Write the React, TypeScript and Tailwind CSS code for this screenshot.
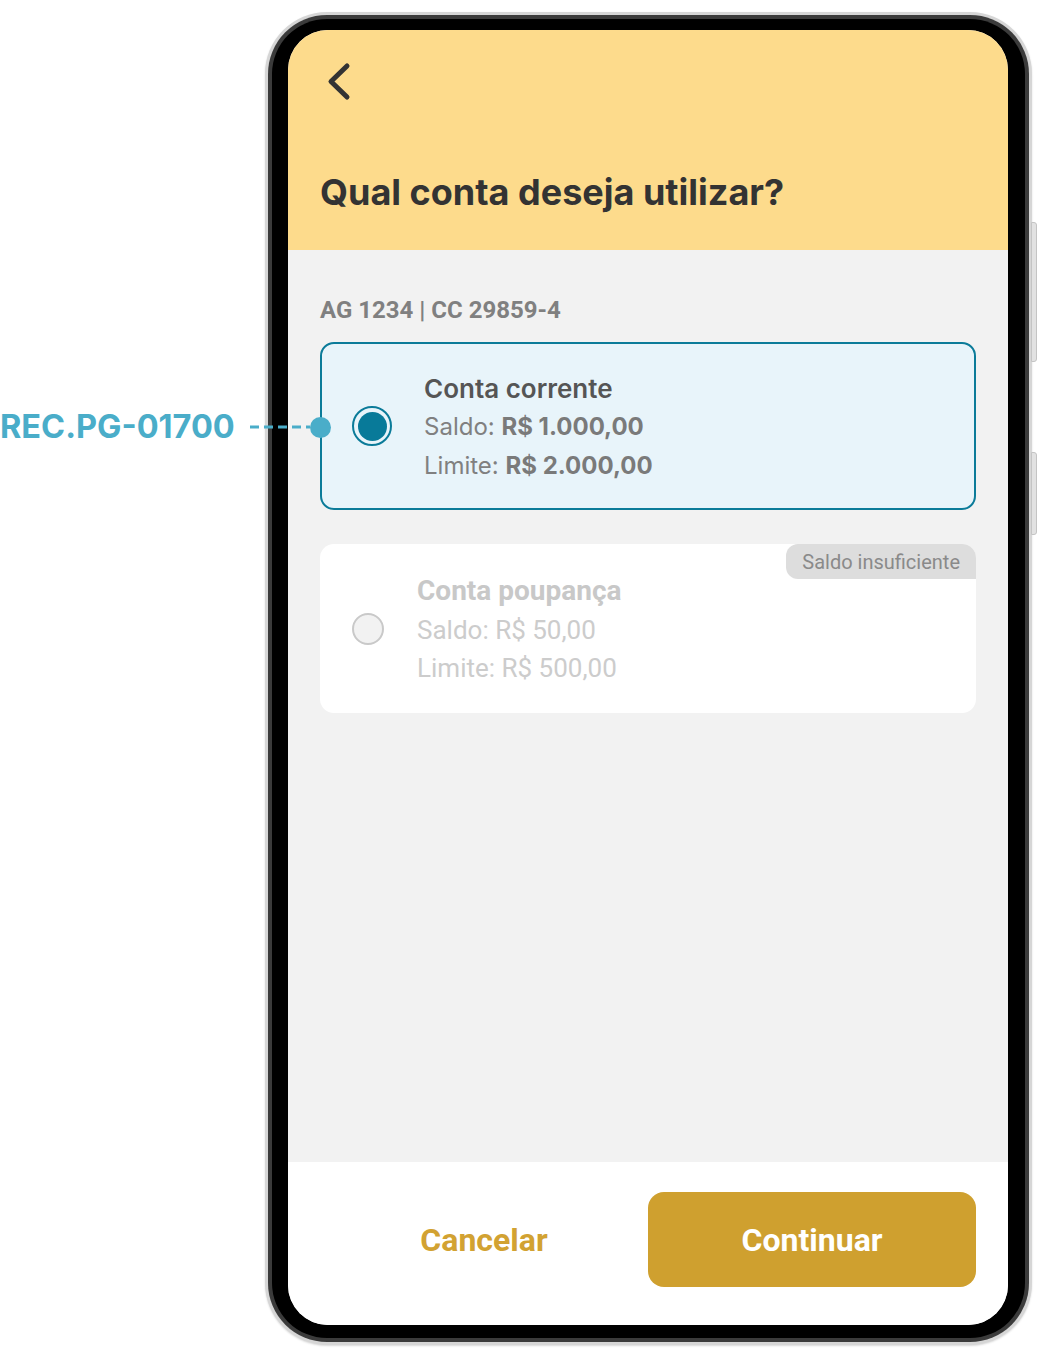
import { useState } from "react";

interface Account {
  id: string;
  name: string;
  saldo: string;
  limite: string;
  disabled?: boolean;
}

const accounts: Account[] = [
  { id: "cc", name: "Conta corrente", saldo: "R$ 1.000,00", limite: "R$ 2.000,00" },
  { id: "cp", name: "Conta poupança", saldo: "R$ 50,00", limite: "R$ 500,00", disabled: true },
];

function BackChevron() {
  return (
    <svg width="32" height="40" viewBox="0 0 32 40" fill="none">
      <path d="M27 4 L11 19.5 L27 35" stroke="#333333" strokeWidth="5" strokeLinecap="round" strokeLinejoin="round" />
    </svg>
  );
}

function ActiveCard({ acc }: { acc: Account }) {
  return (
    <div className="h-[168px] rounded-[14px] border-2 border-[#0b7b99] bg-[#e8f4fa] flex items-center pl-[30px]">
      <div className="w-[40px] h-[40px] rounded-full border-2 border-[#0b7b99] flex items-center justify-center shrink-0">
        <div className="w-[29px] h-[29px] rounded-full bg-[#087a99]" />
      </div>
      <div className="ml-[32px] mt-[3px] font-['Inter',sans-serif] text-[24px] leading-[38.5px] text-[#808080]">
        <div className="font-semibold text-[26px] text-[#555555]">{acc.name}</div>
        <div>
          Saldo: <span className="font-bold text-[#7a7a7a]">{acc.saldo}</span>
        </div>
        <div>
          Limite: <span className="font-bold text-[#7a7a7a]">{acc.limite}</span>
        </div>
      </div>
    </div>
  );
}

function DisabledCard({ acc }: { acc: Account }) {
  return (
    <div className="relative h-[169px] rounded-[14px] bg-white flex items-center pl-[32px]">
      <div className="absolute top-0 right-0 h-[35px] px-[16px] flex items-center rounded-l-[12px] rounded-tr-[14px] bg-[#dddddd] font-['Roboto',sans-serif] text-[20px] text-[#8a8a8a]">
        Saldo insuficiente
      </div>
      <div className="w-[32px] h-[32px] rounded-full border-2 border-[#c9c9c9] bg-[#f2f2f2] shrink-0" />
      <div className="ml-[33px] mt-[3px] font-['Roboto',sans-serif] text-[26px] leading-[38.5px] text-[#cccccc]">
        <div className="font-bold text-[28px] text-[#c8c8c8]">{acc.name}</div>
        <div>Saldo: {acc.saldo}</div>
        <div>Limite: {acc.limite}</div>
      </div>
    </div>
  );
}

function Phone() {
  const [selected] = useState("cc");
  return (
    <div className="relative w-[767px] h-[1333px] rounded-[62px] bg-[#d6d6d6] p-[3px] shadow-[0_1px_2px_rgba(0,0,0,0.15)]">
      <div className="absolute -right-[5px] top-[210px] w-[6px] h-[140px] rounded-r-[3px] bg-[#e2e2e2] border border-[#c4c4c4]" />
      <div className="absolute -right-[5px] top-[440px] w-[6px] h-[83px] rounded-r-[3px] bg-[#e2e2e2] border border-[#c4c4c4]" />
      <div className="relative h-full rounded-[59px] bg-[#3b3b3b] p-[4px]">
        <div className="h-full rounded-[55px] bg-black pt-[11px] pb-[13px] pl-[16px] pr-[17px]">
          <div className="h-full rounded-[40px] overflow-hidden flex flex-col bg-[#f2f2f2]">
            <header className="h-[220px] shrink-0 bg-[#fddb8c] px-8 pt-[32px] flex flex-col">
              <BackChevron />
              <h1 className="mt-auto pb-[36px] font-['Inter',sans-serif] font-bold text-[36px] leading-[44px] text-[#333333]">
                Qual conta deseja utilizar?
              </h1>
            </header>
            <main className="flex-1 px-8 pt-[46px]">
              <p className="font-['Roboto',sans-serif] font-bold text-[24px] leading-[28px] text-[#808080]">
                AG 1234 | CC 29859-4
              </p>
              <div className="mt-[18px] flex flex-col gap-[34px]">
                {accounts.map((acc) =>
                  acc.id === selected ? (
                    <ActiveCard key={acc.id} acc={acc} />
                  ) : (
                    <DisabledCard key={acc.id} acc={acc} />
                  )
                )}
              </div>
            </main>
            <footer className="h-[163px] shrink-0 bg-white px-8 pt-[30px] grid grid-cols-2">
              <button className="h-[95px] flex items-center justify-center font-['Roboto',sans-serif] font-bold text-[32px] text-[#d2a232]">
                Cancelar
              </button>
              <button className="h-[95px] rounded-[16px] bg-[#cfa02f] flex items-center justify-center font-['Roboto',sans-serif] font-bold text-[32px] text-white">
                Continuar
              </button>
            </footer>
          </div>
        </div>
      </div>
    </div>
  );
}

export default function App() {
  return (
    <div className="relative w-[1038px] h-[1356px] bg-white overflow-hidden">
      <div className="pl-[265px] pt-[12px]">
        <Phone />
      </div>
      <div className="absolute left-0 top-[407px] h-[40px] flex items-center">
        <span className="w-[250px] font-['Inter',sans-serif] font-bold text-[32.5px] leading-none text-[#4aadc9]">
          REC.PG-01700
        </span>
        <svg width="60" height="4" viewBox="0 0 60 4">
          <line x1="0" y1="2" x2="60" y2="2" stroke="#4aadc9" strokeWidth="3" strokeDasharray="9 5" />
        </svg>
        <div className="w-[21px] h-[21px] rounded-full bg-[#4aadc9]" />
      </div>
    </div>
  );
}
